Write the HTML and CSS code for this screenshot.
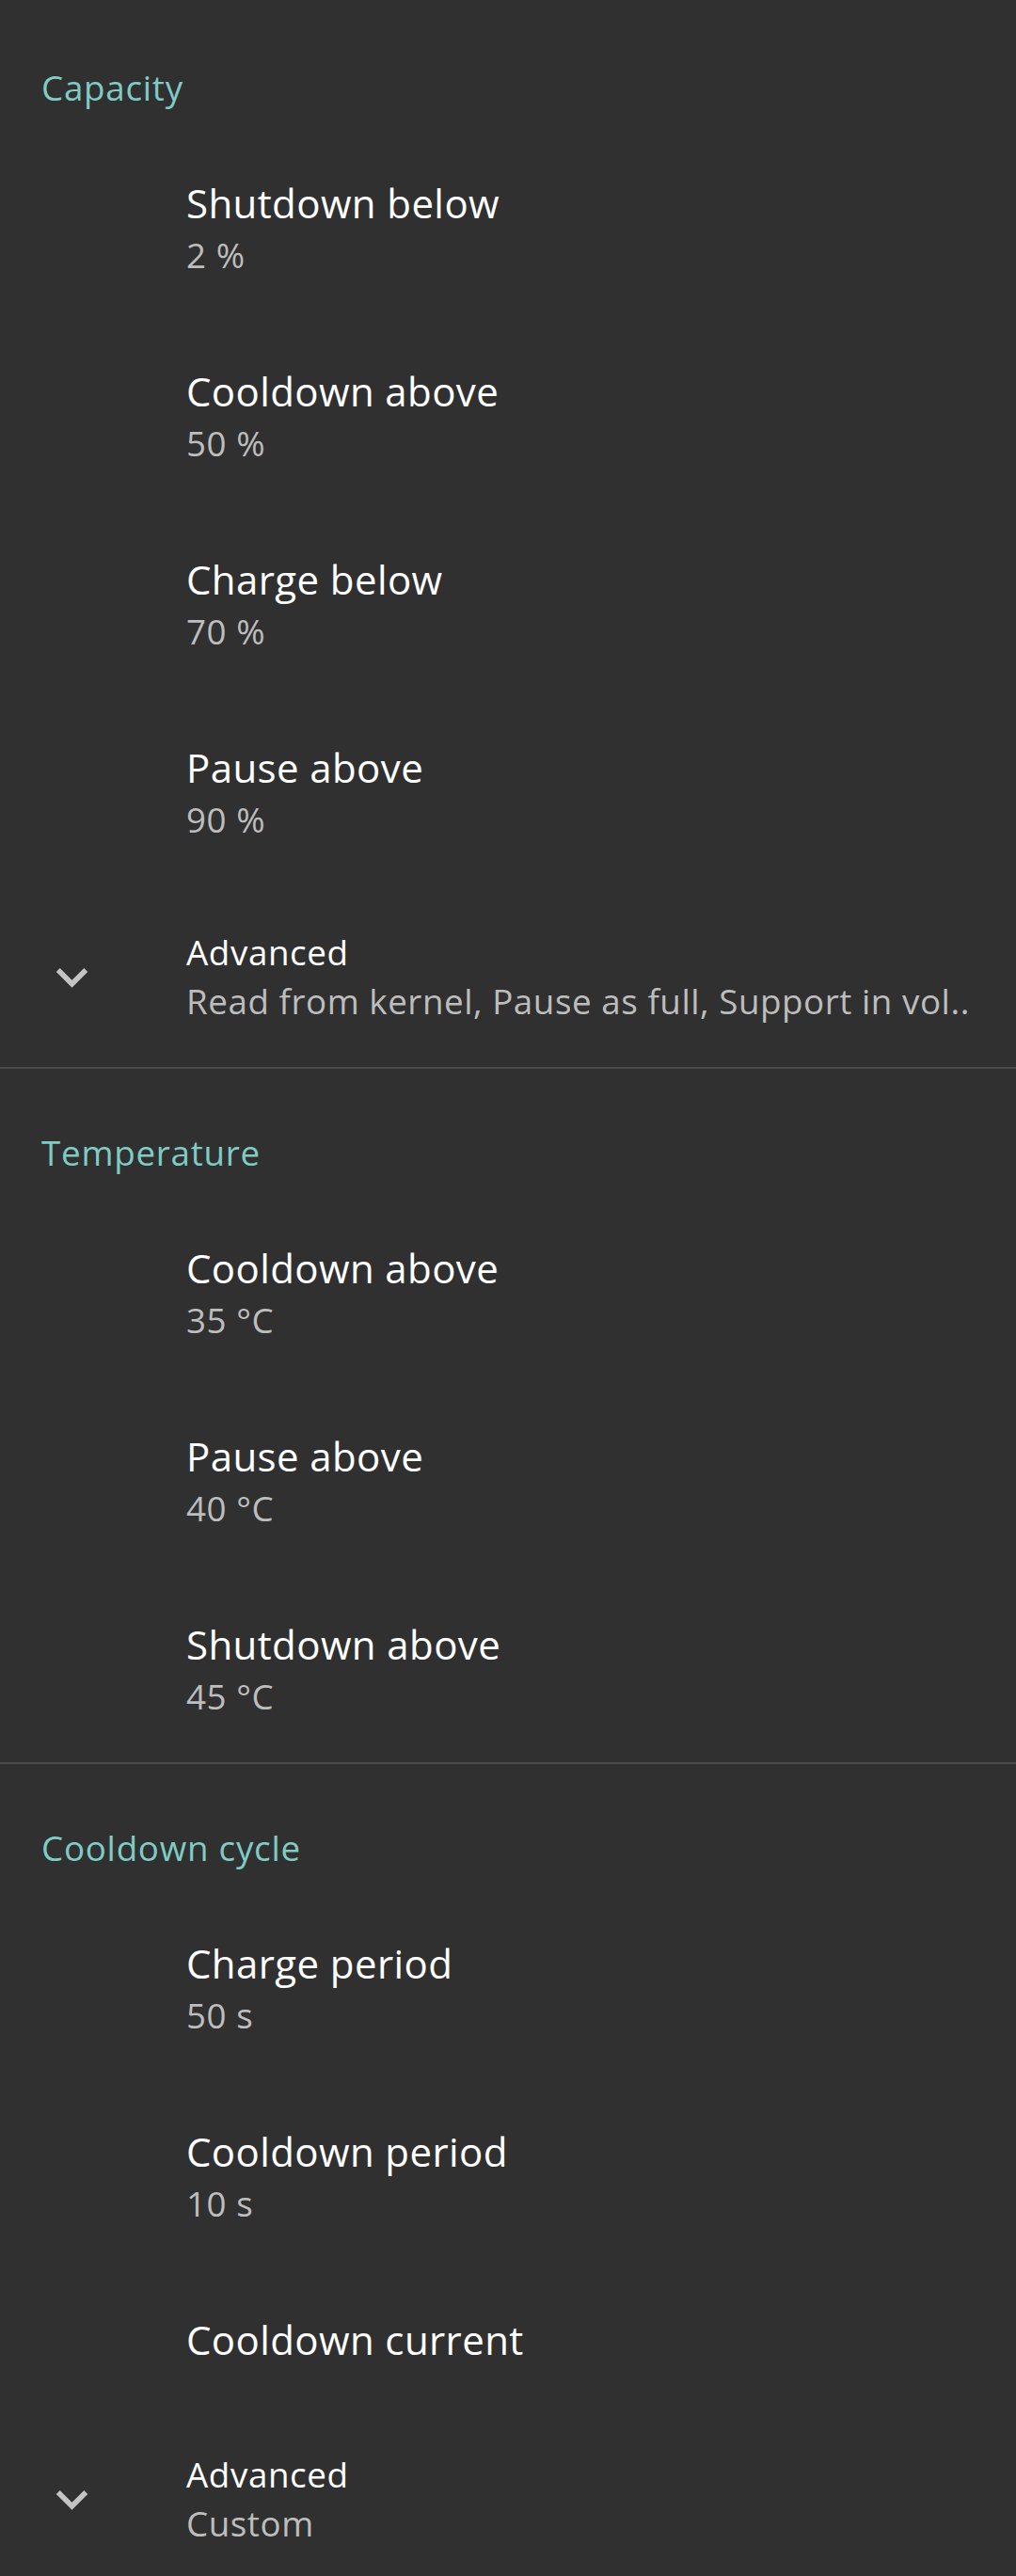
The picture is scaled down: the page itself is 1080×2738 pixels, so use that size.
FILE: index.html
```html
<!DOCTYPE html>
<html lang="en">
<head>
<meta charset="utf-8">
<title>Settings</title>
<link rel="stylesheet" href="styles.css">
</head>
<body>
<main class="screen">
  <section class="group group-first">
    <h2 class="group-title">Capacity</h2>
    <div class="pref"><div class="pref-icon"></div><div class="pref-text"><div class="pref-title">Shutdown below</div><div class="pref-summary">2 %</div></div></div>
    <div class="pref"><div class="pref-icon"></div><div class="pref-text"><div class="pref-title">Cooldown above</div><div class="pref-summary">50 %</div></div></div>
    <div class="pref"><div class="pref-icon"></div><div class="pref-text"><div class="pref-title">Charge below</div><div class="pref-summary">70 %</div></div></div>
    <div class="pref"><div class="pref-icon"></div><div class="pref-text"><div class="pref-title">Pause above</div><div class="pref-summary">90 %</div></div></div>
    <div class="pref pref-advanced"><div class="pref-icon"><svg class="chevron" viewBox="0 0 24 24"><path d="M16.59 8.59L12 13.17 7.41 8.59 6 10l6 6 6-6z"/></svg></div><div class="pref-text"><div class="pref-title">Advanced</div><div class="pref-summary">Read from kernel, Pause as full, Support in vol..</div></div></div>
  </section>
  <hr class="divider">
  <section class="group">
    <h2 class="group-title">Temperature</h2>
    <div class="pref"><div class="pref-icon"></div><div class="pref-text"><div class="pref-title">Cooldown above</div><div class="pref-summary">35 °C</div></div></div>
    <div class="pref"><div class="pref-icon"></div><div class="pref-text"><div class="pref-title">Pause above</div><div class="pref-summary">40 °C</div></div></div>
    <div class="pref"><div class="pref-icon"></div><div class="pref-text"><div class="pref-title">Shutdown above</div><div class="pref-summary">45 °C</div></div></div>
  </section>
  <hr class="divider">
  <section class="group">
    <h2 class="group-title">Cooldown cycle</h2>
    <div class="pref"><div class="pref-icon"></div><div class="pref-text"><div class="pref-title">Charge period</div><div class="pref-summary">50 s</div></div></div>
    <div class="pref"><div class="pref-icon"></div><div class="pref-text"><div class="pref-title">Cooldown period</div><div class="pref-summary">10 s</div></div></div>
    <div class="pref pref-single"><div class="pref-icon"></div><div class="pref-text"><div class="pref-title">Cooldown current</div></div></div>
    <div class="pref pref-advanced"><div class="pref-icon"><svg class="chevron" viewBox="0 0 24 24"><path d="M16.59 8.59L12 13.17 7.41 8.59 6 10l6 6 6-6z"/></svg></div><div class="pref-text"><div class="pref-title">Advanced</div><div class="pref-summary">Custom</div></div></div>
  </section>
</main>
</body>
</html>
```
FILE: styles.css
```css
html, body {
  margin: 0;
  padding: 0;
  background: #303030;
}

.screen {
  font-family: "Open Sans", "Noto Sans", sans-serif;
  color: #ffffff;
  width: 1080px;
}

.group-title {
  margin: 0;
  padding: 63px 0 22px 44px;
  font-size: 36.75px;
  line-height: 52px;
  font-weight: 400;
  letter-spacing: 0.75px;
  color: #80cbc4;
}

.group-first .group-title {
  padding-top: 67px;
}

.divider {
  margin: 0;
  border: 0;
  height: 2px;
  background: #4a4a4a;
}

.pref {
  display: flex;
  align-items: center;
  padding: 47px 0 43px 0;
}

.pref-single {
  padding-bottom: 44px;
}

.pref-icon {
  flex: none;
  width: 198px;
  display: flex;
  align-items: center;
}

.pref-text {
  flex: 1;
  min-width: 0;
}

.pref-title {
  font-size: 42px;
  line-height: 56px;
  letter-spacing: 0.4px;
  color: #ffffff;
}

.pref-summary {
  font-size: 36.75px;
  line-height: 54px;
  letter-spacing: 0.55px;
  color: #bdbdbd;
  white-space: nowrap;
}

.pref-advanced {
  padding: 45px 0 44px 0;
}

.pref-advanced .pref-title {
  font-size: 36.75px;
  line-height: 52px;
  letter-spacing: 0.6px;
}

.pref-advanced .pref-summary {
  line-height: 52px;
}

.chevron {
  width: 67px;
  height: 67px;
  margin-left: 43px;
  fill: #c4c4c4;
}
```
